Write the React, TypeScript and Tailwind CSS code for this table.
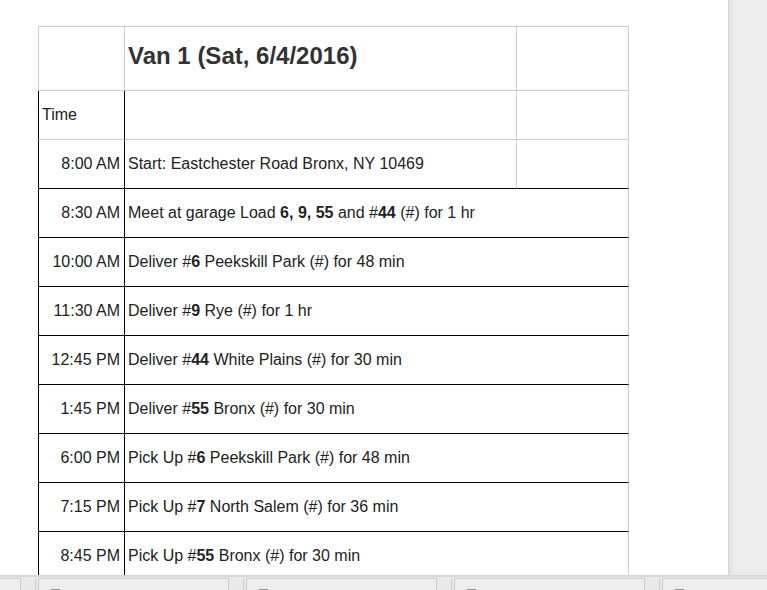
import React from "react";

type Stop = { time: string; desc: React.ReactNode };

const stops: Stop[] = [
    { time: "8:30 AM", desc: <>Meet at garage Load <b>6, 9, 55</b> and #<b>44</b> (#) for 1 hr</> },
    { time: "10:00 AM", desc: <>Deliver #<b>6</b> Peekskill Park (#) for 48 min</> },
    { time: "11:30 AM", desc: <>Deliver #<b>9</b> Rye (#) for 1 hr</> },
    { time: "12:45 PM", desc: <>Deliver #<b>44</b> White Plains (#) for 30 min</> },
    { time: "1:45 PM", desc: <>Deliver #<b>55</b> Bronx (#) for 30 min</> },
    { time: "6:00 PM", desc: <>Pick Up #<b>6</b> Peekskill Park (#) for 48 min</> },
    { time: "7:15 PM", desc: <>Pick Up #<b>7</b> North Salem (#) for 36 min</> },
    { time: "8:45 PM", desc: <>Pick Up #<b>55</b> Bronx (#) for 30 min</> },
];

const Tab = () => (
    <>
        <div className="relative w-[191px] shrink-0 h-full border-l border-t border-r border-[#cbcbcb] bg-[#eeeeee]">
            <div className="absolute left-[12px] top-[10px] w-[9px] h-[10px] border border-[#8a8a8a] bg-white" />
        </div>
        <div className="w-[14px] shrink-0" />
        <div className="w-px shrink-0 h-full bg-[#cbcbcb]" />
        <div className="w-[2px] shrink-0" />
    </>
);

export default function App() {
    return (
        <div className="w-[767px] h-[590px] flex flex-col overflow-hidden bg-white text-[16px] text-[#222]"
             style={{ fontFamily: '"Liberation Sans", Arial, sans-serif' }}>
            <div className="flex flex-1 min-h-0">
                <div className="flex-1 min-w-0 overflow-hidden pl-[38px] pt-[26px]">
                    <div className="grid grid-cols-[87px_392px_112px] w-[591px]">
                        {/* header row */}
                        <div className="h-[65px] border border-[#cccccc]" />
                        <div className="h-[65px] border-t border-b border-r border-[#cccccc] flex items-center pl-[3px] pb-[5px] text-[24px] font-bold text-[#333]">
                            Van 1 (Sat, 6/4/2016)
                        </div>
                        <div className="h-[65px] border-t border-b border-r border-[#cccccc]" />

                        {/* time label row */}
                        <div className="h-[49px] border-l border-r border-l-black border-r-black border-b border-b-[#cccccc] flex items-center pl-[3px]">
                            Time
                        </div>
                        <div className="h-[49px] border-b border-r border-[#cccccc]" />
                        <div className="h-[49px] border-b border-r border-[#cccccc]" />

                        {/* start row */}
                        <div className="h-[49px] border-l border-r border-b border-black flex items-center justify-end pr-[4px]">
                            8:00 AM
                        </div>
                        <div className="h-[49px] border-b border-b-black border-r border-r-[#cccccc] flex items-center pl-[3px]">
                            Start: Eastchester Road Bronx, NY 10469
                        </div>
                        <div className="h-[49px] border-b border-b-black border-r border-r-[#cccccc]" />

                        {stops.map((s) => (
                            <React.Fragment key={s.time}>
                                <div className="h-[49px] border-l border-r border-b border-black flex items-center justify-end pr-[4px] whitespace-nowrap">
                                    {s.time}
                                </div>
                                <div className="col-span-2 h-[49px] border-b border-b-black border-r border-r-[#cccccc] flex items-center pl-[3px] whitespace-nowrap">
                                    <span>{s.desc}</span>
                                </div>
                            </React.Fragment>
                        ))}
                    </div>
                </div>
                {/* vertical scrollbar strip */}
                <div className="w-[39px] shrink-0 flex">
                    <div className="w-px bg-[#d2d2d2]" />
                    <div className="w-[6px] bg-gradient-to-r from-[#e2e2e2] to-[#ececec]" />
                    <div className="flex-1 bg-[#ececec]" />
                </div>
            </div>
            {/* bottom tab bar */}
            <div className="h-[15px] shrink-0 bg-[#e9e9e9] border-t-2 border-[#d6d6d6] overflow-hidden">
                <div className="flex h-full pt-px ml-[-170px]">
                    <Tab />
                    <Tab />
                    <Tab />
                    <Tab />
                    <Tab />
                </div>
            </div>
        </div>
    );
}
